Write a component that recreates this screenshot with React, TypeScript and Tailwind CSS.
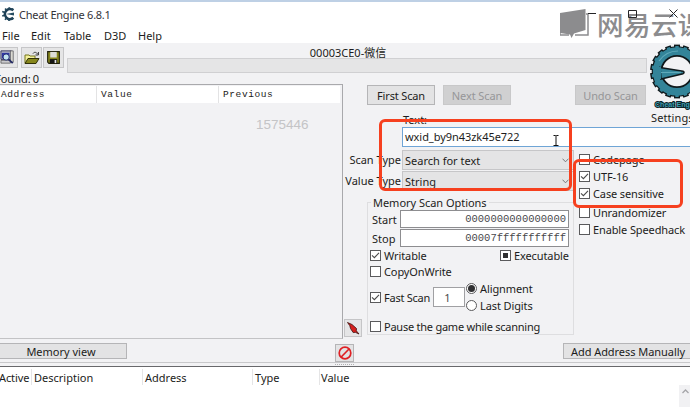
import type { ReactNode } from "react";

const UI = "font-['Noto_Sans','Noto_Sans_CJK_SC',sans-serif] text-[11px] leading-none whitespace-pre text-[#1c1c20]";
const MONO = "font-['Liberation_Mono',monospace]";

function Check({ state = "off", children, className = "" }: { state?: "off" | "on" | "mixed"; children: ReactNode; className?: string }) {
  return (
    <div className={`flex items-center gap-[3px] ${className}`}>
      <span className="flex size-[11px] shrink-0 items-center justify-center border border-[#5a5a5c] bg-white">
        {state === "on" && (
          <svg viewBox="0 0 9 9" className="size-[9px]" fill="none" stroke="#4a4a4a" strokeWidth="1.1">
            <path d="M1 4.3 3.4 6.7 8 1.8" />
          </svg>
        )}
        {state === "mixed" && <span className="size-[5px] bg-[#303032]" />}
      </span>
      <span>{children}</span>
    </div>
  );
}

function Radio({ on = false, children }: { on?: boolean; children: ReactNode }) {
  return (
    <div className="flex h-[17px] items-center gap-[3px] tracking-[-0.1px]">
      <span className="flex size-[11px] items-center justify-center rounded-full border border-[#5a5a5c] bg-white">
        {on && <span className="size-[7px] rounded-full bg-[#303032]" />}
      </span>
      <span>{children}</span>
    </div>
  );
}

function Combo({ children }: { children: ReactNode }) {
  return (
    <div className="flex h-[20px] w-[172px] items-center justify-between border border-[#c6c6c8] bg-[#e4e4e5] pr-[4px] pl-[2px]">
      <span>{children}</span>
      <svg viewBox="0 0 7 5" className="h-[5px] w-[7px]" fill="none" stroke="#77777a">
        <path d="M.5.7 3.5 3.8 6.5.7" />
      </svg>
    </div>
  );
}

function Button({ disabled = false, className, children }: { disabled?: boolean; className: string; children: ReactNode }) {
  return (
    <div className={`flex shrink-0 items-center justify-center border ${disabled ? "border-[#c8c8c9] bg-[#d0d0d1] text-[#969698]" : "border-[#b5b5b7] bg-[#e3e3e4]"} ${className}`}>
      {children}
    </div>
  );
}

function Titlebar() {
  return (
    <div className="flex h-[24px] items-center pl-[2px]">
      <svg viewBox="0 0 14 14" className="size-[14px]" fill="none">
        <path d="M11.3 3.4A5 5 0 1 0 11.3 10.8" stroke="#1d3f55" strokeWidth="2.6" />
        <path d="M7.2 .2v2M3.2 1.5l1 1.5M.2 4.5l2 .8M.2 9l2-.6M3 12.8l1.3-1.6M7 14v-2M10.8 12.5l-1-1.5M11 1.4l-1 1.5" stroke="#24485d" strokeWidth="1.7" />
        <path d="M4 7 12 5.6V8.4Z" fill="#274d62" />
      </svg>
      <span className="ml-[3px] text-[11px] tracking-[-0.25px] text-[#333338]">Cheat Engine 6.8.1</span>
    </div>
  );
}

function MenuBar() {
  return (
    <div className="flex h-[17px] items-center pt-px pl-[2px]">
      <span className="w-[29px]">File</span>
      <span className="w-[33px]">Edit</span>
      <span className="w-[40px]">Table</span>
      <span className="w-[34px]">D3D</span>
      <span>Help</span>
    </div>
  );
}

function ProcessIcon() {
  return (
    <svg viewBox="0 0 18 20" className="h-[19px] w-[17px]">
      <path d="M1 3h11v9H1z" fill="#b9bcc8" stroke="#34345c" />
      <path d="M2 5h8v6H2z" fill="#2f37a4" />
      <path d="M11 3h3v12h-3z" fill="#dad9d2" stroke="#55555c" strokeWidth=".8" />
      <path d="M1 13h10v3H1z" fill="#c9c9cd" stroke="#444" strokeWidth=".7" />
      <circle cx="6.5" cy="9.5" r="3.3" fill="#c4e4f0" stroke="#222a73" />
      <path d="m9 12 4.5 4" stroke="#252b66" strokeWidth="2" />
    </svg>
  );
}

function OpenIcon() {
  return (
    <svg viewBox="0 0 16 14" className="h-[14px] w-[16px]">
      <path d="M1 12V4h4l1 1h5v3" fill="#f3f09a" stroke="#77771c" />
      <path d="M1 12.5 4 7.5h11l-3 5Z" fill="#86861b" stroke="#303008" />
      <path d="M9 2.5c1.5-2 3.5-1.3 4.7.7M14.4 1v3h-3" fill="none" stroke="#333" />
    </svg>
  );
}

function SaveIcon() {
  return (
    <svg viewBox="0 0 14 14" className="size-[13px]">
      <path d="M.7.7h12.6v12.6H2L.7 12Z" fill="#85851d" stroke="#20200a" strokeWidth="1.2" />
      <path d="M3.5 1h7v6h-7z" fill="#dcdcd8" />
      <path d="M3 8.7h8V13H3z" fill="#161616" />
      <path d="M8.2 9.7h1.8V13H8.2z" fill="#e6e6e6" />
    </svg>
  );
}

const teeth = Array.from({ length: 18 }, (_, i) => i * 20);

function GearLogo() {
  return (
    <svg viewBox="0 0 41 66" className="h-[66px] w-[41px]" fill="none">
      <g stroke="#10191c" strokeWidth="6">
        {teeth.map((a) => (
          <path key={a} d="M28 7V.6" transform={`rotate(${a} 28 27.5)`} />
        ))}
      </g>
      <circle cx="28" cy="27.5" r="20" stroke="#10191c" strokeWidth="10.6" />
      <g stroke="#338499" strokeWidth="3.4">
        {teeth.map((a) => (
          <path key={a} d="M28 8V2" transform={`rotate(${a} 28 27.5)`} />
        ))}
      </g>
      <circle cx="28" cy="27.5" r="20.4" stroke="#338499" strokeWidth="7.6" />
      <path d="M11 23.5 34 27.3q2 1 0 2.4L12 35Z" fill="#338499" stroke="#10191c" strokeWidth="1.6" />
      <path d="M6 23h6v12H6z" fill="#338499" />
      <path d="M12 28.5 32 28.3" stroke="#5fa9b9" strokeWidth="1.2" />
      <path d="M10 17Q17 7 29 7" stroke="#5fa9b9" strokeWidth="1.2" />
      <text x="6" y="63.2" fontFamily="Liberation Sans" fontSize="7.5" fontWeight="bold" fill="#3c9eb0" stroke="#0f2329" strokeWidth="2" paintOrder="stroke" textLength="45" lengthAdjust="spacingAndGlyphs">Cheat Engine</text>
    </svg>
  );
}

function Toolbar() {
  return (
    <div className="flex h-[41px] shrink-0">
      <div className="w-[67px] shrink-0">
        <div className="flex pt-[4px]">
          <div className="flex h-[21px] w-[18px] items-center border-y border-r border-[#c6c6c8] bg-[#e5e5e6]"><ProcessIcon /></div>
          <div className="ml-[3px] flex h-[21px] w-[21px] items-center justify-center border border-[#c6c6c8] bg-[#e5e5e6]"><OpenIcon /></div>
          <div className="ml-[1px] flex h-[21px] w-[21px] items-center justify-center border border-[#c6c6c8] bg-[#e5e5e6]"><SaveIcon /></div>
        </div>
        <div className="-ml-[5px] flex h-[16px] items-center gap-[2px] pt-[4px]"><span>Found:</span><span>0</span></div>
      </div>
      <div className="w-[580px] shrink-0">
        <div className="flex h-[15px] items-center justify-center pt-[3px] pr-[18px]">00003CE0-微信</div>
        <div className="h-[15px] border border-[#d0d0d2] bg-[#e5e5e6]" />
      </div>
      <div className="ml-[2px] flex w-[41px] flex-col">
        <div className="h-[67px] shrink-0 pt-[1px]"><GearLogo /></div>
        <span className="mt-[2px] ml-[2px] tracking-[0.1px]">Settings</span>
      </div>
    </div>
  );
}

function FoundList() {
  return (
    <div className="h-[255px] w-[343px] shrink-0 border-t border-r border-b border-[#a9a9ac] border-b-[#c3c3c5]">
      <div className={`mr-[2px] mt-[1px] flex h-[17px] items-center bg-white text-[9.5px] ${MONO}`}>
        <span className="flex h-full w-[97px] items-center border-r border-[#e3e3e4] pl-[1px] tracking-[0.6px]">Address</span>
        <span className="flex h-full w-[122px] items-center border-r border-[#e3e3e4] pl-[4px] tracking-[0.6px]">Value</span>
        <span className="pl-[4px] tracking-[0.6px]">Previous</span>
      </div>
      <div className="pt-[15px] pl-[256px] font-['Liberation_Sans',sans-serif] text-[13.5px] text-[#c4c4c6]">1575446</div>
    </div>
  );
}

function RangeRow({ label, value }: { label: string; value: string }) {
  return (
    <div className="flex h-[19px] items-start">
      <span className="w-[30px] pt-[4px] pl-[2px]">{label}</span>
      <div className={`flex h-[18px] w-[169px] items-center justify-end border border-[#8d8d90] bg-white pr-[2px] text-[10.5px] text-[#48484c] ${MONO}`}>{value}</div>
    </div>
  );
}

function MemoryOptions() {
  return (
    <fieldset className="mt-[5px] ml-[24px] h-[138px] w-[207px] shrink-0 border border-[#dedee0] px-[2px]">
      <legend className="ml-[1px] flex h-[10px] items-center px-[2px] tracking-[-0.03px]">Memory Scan Options</legend>
      <div className="pt-[3px]">
        <RangeRow label="Start" value="0000000000000000" />
        <RangeRow label="Stop" value="00007fffffffffff" />
      </div>
      <div className="flex h-[15px] items-center">
        <Check state="on" className="w-[130px] tracking-[-0.1px]">Writable</Check>
        <Check state="mixed" className="tracking-[-0.1px]">Executable</Check>
      </div>
      <Check className="h-[17px] tracking-[-0.1px]">CopyOnWrite</Check>
      <div className="flex h-[34px] items-center">
        <Check state="on" className="w-[63px] tracking-[-0.25px]">Fast Scan</Check>
        <div className="flex h-[20px] w-[32px] items-center justify-center border border-[#a0a0a3] bg-white pr-[3px] text-[#48484c]">1</div>
        <div className="ml-[1px]">
          <Radio on>Alignment</Radio>
          <Radio>Last Digits</Radio>
        </div>
      </div>
      <Check className="mt-[4px] h-[16px] tracking-[-0.24px]">Pause the game while scanning</Check>
    </fieldset>
  );
}

function ScanPanel() {
  return (
    <div className="flex min-w-0 flex-1 flex-col">
      <div className="flex pt-[1px] pl-[24px]">
        <Button className="h-[20px] w-[68px] tracking-[-0.15px]">First Scan</Button>
        <Button disabled className="ml-[8px] h-[20px] w-[68px] tracking-[-0.1px]">Next Scan</Button>
        <Button disabled className="ml-[64px] h-[20px] w-[71px] tracking-[-0.1px]">Undo Scan</Button>
      </div>
      <div className="flex h-[22px] items-center pt-[7px] pl-[60px]">Text:</div>
      <div className="ml-[59px] flex h-[20px] items-center border-y border-l border-[#6fa5d6] bg-white pb-[2px] pl-[2px] tracking-[-0.05px]">wxid_by9n43zk45e722</div>
      <div className="flex">
        <div className="w-[231px] shrink-0 pt-[3px]">
          <div className="flex h-[21px] items-start justify-end gap-[1px]"><span className="pt-[4px]">Scan Type</span><Combo>Search for text</Combo></div>
          <div className="flex h-[21px] items-start justify-end gap-[1px]"><span className="pt-[4px]">Value Type</span><Combo>String</Combo></div>
          <MemoryOptions />
        </div>
        <div className="flex flex-col pt-[4px] pl-[5px] tracking-[-0.12px]">
          <Check className="h-[17px]">Codepage</Check>
          <Check state="on" className="h-[17px]">UTF-16</Check>
          <Check state="on" className="h-[16px]">Case sensitive</Check>
          <Check className="mt-[3px] h-[17px]">Unrandomizer</Check>
          <Check className="h-[17px]">Enable Speedhack</Check>
        </div>
      </div>
    </div>
  );
}

function ActionBar() {
  return (
    <div className="flex h-[24px] shrink-0 border-b border-[#c8c8ca]">
      <Button className="mt-[4px] h-[16px] w-[127px] border-l-0 pr-[4px]">Memory view</Button>
      <Button className="mt-[5px] ml-[208px] h-[18px] w-[19px]">
        <svg viewBox="0 0 14 14" className="size-[14px]" fill="none" stroke="#df2024" strokeWidth="1.7"><circle cx="7" cy="7" r="5.8" /><path d="m3.2 11 7.8-8" /></svg>
      </Button>
      <Button className="mt-[4px] ml-[209px] h-[16px] w-[130px] tracking-[-0.05px]">Add Address Manually</Button>
    </div>
  );
}

function AddressTable() {
  return (
    <div className="flex flex-1 flex-col border-t border-[#68686b] bg-white">
      <div className="flex h-[18px] items-center pt-[2px]">
        <span className="-ml-px flex h-[16px] w-[33px] items-center border-r border-[#e5e5e6] tracking-[-0.1px]">Active</span>
        <span className="flex h-[16px] w-[111px] items-center border-r border-[#e5e5e6] pl-[2px]">Description</span>
        <span className="flex h-[16px] w-[110px] items-center border-r border-[#e5e5e6] pl-[2px]">Address</span>
        <span className="flex h-[16px] w-[67px] items-center border-r border-[#e5e5e6] pl-[2px]">Type</span>
        <span className="pl-[1px]">Value</span>
      </div>
      <div className="ml-auto flex w-[11px] flex-1 justify-center bg-[#f1f1f3] pt-[4px]">
        <svg viewBox="0 0 7 5" className="ml-[2px] h-[5px] w-[7px]" fill="none" stroke="#a5a5a8" strokeWidth="1.3"><path d="M.5 4 3.5 1 6.5 4" /></svg>
      </div>
    </div>
  );
}

function Overlays() {
  return (
    <>
      <div className="absolute top-[119px] left-[379px] h-[72px] w-[193px] rounded-[6px] border-3 border-[#f6401f]" />
      <div className="absolute top-[159px] left-[573px] h-[49px] w-[110px] rounded-[6px] border-3 border-[#f6401f]" />
      <svg viewBox="0 0 30 31" className="absolute top-[8px] left-[560px] h-[31px] w-[30px]">
        <path d="M26 6h2v21H15M0 25v2h9" fill="none" stroke="#8c8c8e" strokeWidth="1.5" />
        <path d="M0 5 25.5 1v21L14 25.5 11.5 30 10 26.5 0 25Z" fill="#8c8c8e" />
      </svg>
      <span className="absolute top-[8px] left-[597px] font-['Noto_Sans_CJK_SC',sans-serif] text-[26.5px] leading-[32px] font-medium tracking-[0.4px] text-[#8c8c8e]">网易云课</span>
      <svg viewBox="0 0 92 12" className="absolute top-[8px] left-[587px] h-[12px] w-[92px]" fill="none" stroke="#252527">
        <path d="M1 5.5h8M41.5 2.5h8v7h-8zM82.5 1.5l8 8M90.5 1.5l-8 8" />
      </svg>
      <svg viewBox="0 0 6 11" className="absolute top-[135px] left-[553px] h-[11px] w-[6px]" fill="none" stroke="#111">
        <path d="M.5.5h2l.5.5.5-.5h2M3 1v9M.5 10.5h5" />
      </svg>
      <div className="absolute top-[319px] left-[344px] flex h-[18px] w-[18px] items-center justify-center border border-[#c5c5c7] bg-[#e5e5e6]">
        <svg viewBox="0 0 14 14" className="size-[14px]">
          <path d="M1.5 1.5 6 3.5 10.5 7.5 10.3 9.8 13 13 9.3 11.3 7.2 11.6 4.5 7.5 3.8 4.7Z" fill="#d51f1d" stroke="#3c1010" strokeWidth=".8" />
        </svg>
      </div>
    </>
  );
}

export default function App() {
  return (
    <div className={`relative flex h-[407px] w-[690px] flex-col overflow-hidden bg-[#f2f2f4] ${UI}`}>
      <div className="h-[43px] shrink-0 border-t-2 border-[#bed0e5] bg-white">
        <Titlebar />
        <MenuBar />
      </div>
      <Toolbar />
      <div className="flex h-[255px] shrink-0">
        <FoundList />
        <ScanPanel />
      </div>
      <ActionBar />
      <div className="flex h-[3px] shrink-0 items-center justify-center pr-[2px]">
        <span className="h-px w-[19px] border-t border-dotted border-[#b0b0b2]" />
      </div>
      <AddressTable />
      <Overlays />
    </div>
  );
}
